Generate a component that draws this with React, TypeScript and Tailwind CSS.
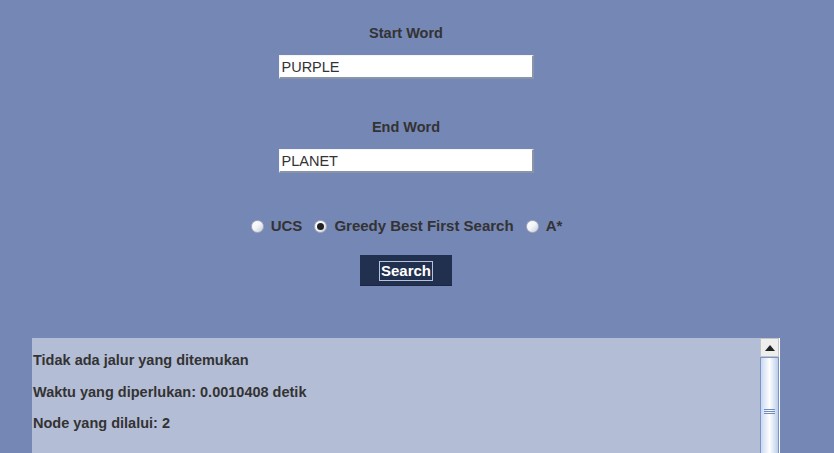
import { useState } from 'react'

const algos = ['UCS', 'Greedy Best First Search', 'A*']

export default function App() {
	const [start, setStart] = useState('PURPLE')
	const [end, setEnd] = useState('PLANET')
	const [algo, setAlgo] = useState('Greedy Best First Search')

	return (
		<div className="h-[453px] w-[834px] overflow-hidden bg-[#7587b5] font-['Liberation_Sans',Arial,sans-serif] text-[#333333]">
			<div className="flex w-[812px] flex-col items-center pt-[25px]">
				<label className="h-4 text-[14.5px] font-bold leading-4">Start Word</label>
				<WordInput value={start} onChange={setStart} />
				<label className="mt-10 h-4 text-[14.5px] font-bold leading-4">End Word</label>
				<WordInput value={end} onChange={setEnd} />

				<div className="mt-[45px] flex h-4 items-center gap-[12px] pl-[1px]">
					{algos.map((a) => (
						<Radio
							key={a}
							label={a}
							checked={algo === a}
							onSelect={() => setAlgo(a)}
						/>
					))}
				</div>

				<button className="mt-[21px] flex h-[31px] w-[92px] items-center justify-center border-b border-[#1d2640] bg-[#223050] pt-[2px]">
					<span className="border border-[#b8c2da] px-[1px] text-[15px] font-bold leading-[18px] text-white">
						Search
					</span>
				</button>
			</div>

			<div className="ml-[32px] mt-[52px] flex h-[200px] w-[748px] bg-[#b3bdd6]">
				<div className="flex-1 pl-[1px] pt-[14px] text-[14.5px] font-bold leading-4">
					<p>Tidak ada jalur yang ditemukan</p>
					<p className="mt-[16px]">Waktu yang diperlukan: 0.0010408 detik</p>
					<p className="mt-[15px]">Node yang dilalui: 2</p>
				</div>
				<div className="flex w-[20px] flex-col border-r border-white bg-[#eeeeee]">
					<div className="flex h-[19px] items-center justify-center border border-[#c4c4c4] bg-[#eeeeee]">
						<svg width="10" height="6" viewBox="0 0 10 6">
							<path d="M0 6 L5 0 L10 6 Z" fill="#222" />
						</svg>
					</div>
					<div className="relative flex-1 border border-[#7b94c9] bg-gradient-to-r from-[#c9d8f1] via-white to-[#bccdea]">
						<div className="absolute left-[3px] top-[51px] flex w-[11px] flex-col gap-[1px]">
							<div className="h-px bg-[#6f8cc4]" />
							<div className="h-px bg-[#6f8cc4]" />
							<div className="h-px bg-[#6f8cc4]" />
						</div>
					</div>
				</div>
			</div>
		</div>
	)
}

function WordInput({
	value,
	onChange,
}: {
	value: string
	onChange: (v: string) => void
}) {
	return (
		<input
			value={value}
			onChange={(e) => onChange(e.target.value)}
			className="mt-[14px] h-[24px] w-[255px] border-b-2 border-l border-r-2 border-t border-b-[#8a94a8] border-l-[#f4f6fa] border-r-[#8a94a8] border-t-[#f4f6fa] bg-white pl-[2px] pt-[1px] text-[14.5px] leading-[20px] text-[#333333] outline-none"
		/>
	)
}

function Radio({
	label,
	checked,
	onSelect,
}: {
	label: string
	checked: boolean
	onSelect: () => void
}) {
	return (
		<label className="flex cursor-pointer items-center" onClick={onSelect}>
			<span className="flex h-[13px] w-[13px] items-center justify-center rounded-full border border-[#a6adbb] bg-gradient-to-br from-white via-[#f2f4f8] to-[#c5ccd8]">
				{checked && <span className="h-[7px] w-[7px] rounded-full bg-[#222222]" />}
			</span>
			<span className="ml-[7px] text-[15px] font-bold leading-4">{label}</span>
		</label>
	)
}
